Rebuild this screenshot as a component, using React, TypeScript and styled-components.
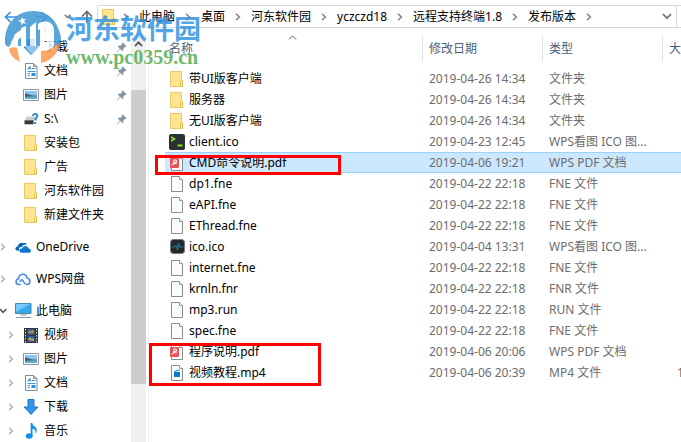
import React from 'react';
import styled, { createGlobalStyle, css } from 'styled-components';

const GlobalStyle = createGlobalStyle`
  * { box-sizing: border-box; }
  body {
    margin: 0;
    background: #fff;
    color: #000;
    font: 12px/20px 'Noto Sans', 'Noto Sans CJK SC', sans-serif;
    overflow: hidden;
  }
  button {
    font: inherit;
    color: inherit;
    background: none;
    border: 0;
    padding: 0;
    margin: 0;
    text-align: left;
    white-space: nowrap;
  }
  svg { display: block; flex: none; }
`;

const Window = styled.div`
  position: relative;
  display: flex;
  flex-direction: column;
  height: 100vh;
  overflow: hidden;
`;

const Toolbar = styled.header`
  display: flex;
  flex: none;
  height: 35px;
  padding: 5px 0 7px 4px;
`;

const NavButtons = styled.div`
  display: flex;
  align-items: center;
  flex: 0 0 93px;
`;

const NavButton = styled.button<{ $wide?: boolean }>`
  width: ${p => (p.$wide ? 30 : 16)}px;
`;

const AddressBar = styled.nav`
  display: flex;
  align-items: center;
  flex: 1;
  min-width: 0;
  height: 23px;
  border: 1px solid #d9d9d9;
  border-right: 0;
  padding-left: 4px;
`;

const Crumb = styled.span`
  display: flex;
  align-items: center;
  gap: 10px;
  margin-left: 10px;

  &:first-of-type {
    margin-left: 7px;
  }
`;

const Dropdown = styled.button`
  display: flex;
  align-items: center;
  justify-content: flex-end;
  flex: 1;
  height: 100%;
  padding-right: 4px;
  border-right: 1px solid #d9d9d9;
  margin-right: 4px;
`;

const Body = styled.div`
  display: flex;
  flex: 1;
  min-height: 0;
`;

const Sidebar = styled.aside`
  display: flex;
  flex: 0 0 149px;
  border-right: 1px solid #f0f0f0;
`;

const Tree = styled.nav`
  flex: 1;
  min-width: 0;
  overflow: hidden;
`;

const Group = styled.div`
  margin-bottom: 8px;
`;

const Item = styled.button<{ $nested?: boolean }>`
  display: flex;
  align-items: center;
  width: 100%;
  height: 24px;
  padding-left: ${p => (p.$nested ? 8 : 0)}px;
  padding-right: 4px;
`;

const Expander = styled.span`
  display: flex;
  width: 15px;
`;

const ItemIcon = styled.span`
  display: flex;
  justify-content: center;
  width: 16px;
  margin-right: 5px;
`;

const ItemLabel = styled.span`
  flex: 1;
`;

const ScrollTrack = styled.div`
  flex: 0 0 15px;
  margin-right: 2px;
  background: #f0f0f0;
`;

const ScrollUp = styled.button`
  display: flex;
  justify-content: center;
  width: 100%;
  height: 55px;
  padding-top: 6px;
`;

const ScrollThumb = styled.div`
  height: 294px;
  background: #cdcdcd;
`;

const Files = styled.main`
  position: relative;
  flex: 1;
  min-width: 0;
  padding-left: 16px;
  overflow: hidden;
`;

const SortMark = styled.span`
  position: absolute;
  left: 139px;
  top: 0;
`;

const Table = styled.table`
  width: 100%;
  table-layout: fixed;
  border-collapse: separate;
  border-spacing: 0;
`;

const Heading = styled.th<{ $width?: number; $first?: boolean }>`
  width: ${p => (p.$width ? `${p.$width}px` : 'auto')};
  height: 27px;
  padding: 0 0 0 ${p => (p.$first ? 4 : 6)}px;
  border-right: ${p => (p.$width ? '1px solid #e5e5e5' : '0')};
  color: #4c607a;
  font-weight: 400;
  text-align: left;
  white-space: nowrap;
`;

const Spacer = styled.tr`
  height: 6px;
`;

const Row = styled.tr<{ $selected?: boolean }>`
  height: 21px;
  ${p =>
    p.$selected &&
    css`
      background: #cce8ff;
      td {
        box-shadow: inset 0 1px #99d1ff, inset 0 -1px #99d1ff;
      }
    `}
`;

const Cell = styled.td<{ $size?: boolean }>`
  height: 21px;
  padding: 0 0 0 ${p => (p.$size ? 14 : 6)}px;
  color: #6d6d6d;
  line-height: 20px;
  white-space: nowrap;
  overflow: hidden;
`;

const NameCell = styled(Cell)`
  padding-left: 4px;
  color: #000;
`;

const FileName = styled.span`
  display: flex;
  align-items: center;
  gap: 4px;
  height: 20px;
`;

const FileIcon = styled.span`
  display: flex;
  justify-content: center;
  width: 16px;
`;

const Mark = styled.div<{ $x: number; $y: number; $w: number; $h: number }>`
  position: absolute;
  left: ${p => p.$x}px;
  top: ${p => p.$y}px;
  width: ${p => p.$w}px;
  height: ${p => p.$h}px;
  border: 3px solid #fd0000;
  pointer-events: none;
`;

const Watermark = styled.div`
  position: absolute;
  left: 5px;
  top: 10px;
  display: flex;
  gap: 4px;
  opacity: 0.8;
  pointer-events: none;
`;

const Brand = styled.div`
  color: #2a8fe0;
  font: 700 27px/32px 'Noto Sans CJK SC', sans-serif;
`;

const Site = styled.div`
  color: #4aa84a;
  font: 700 20px/22px 'Liberation Serif', serif;
  margin-top: 2px;
`;

const BrandText = styled.div`
  padding-top: 2px;
  white-space: nowrap;
`;

const Chevron = ({ color = '#8a8a8a' }: { color?: string }) => (
  <svg width="6" height="8" viewBox="0 0 6 8" fill="none" stroke={color} strokeWidth="1.6">
    <path d="M1 .8 4.4 4 1 7.2" />
  </svg>
);

const ChevronDown = () => (
  <svg width="10" height="7" viewBox="0 0 10 7" fill="none" stroke="#777" strokeWidth="1.8">
    <path d="M1 1.2 5 5.2 9 1.2" />
  </svg>
);

const Arrow = ({ color, turn }: { color: string; turn: number }) => (
  <svg width="14" height="14" viewBox="0 0 14 14" fill="none" stroke={color} strokeWidth="1.7">
    <path transform={`rotate(${turn} 7 7)`} d="M13 7H1.5M6.5 2 1.5 7l5 5" />
  </svg>
);

const Pin = () => (
  <svg width="11" height="11" viewBox="0 0 11 11" fill="#8795a1">
    <path d="M6.6.3 10.7 4.4 9.6 5 8.9 4.9 7.3 6.7 7.2 8.8 6.2 9 4.2 7.1.9 10.5.4 10.2 3.8 6.7 1.9 4.8 2.2 3.8 4.3 3.7 6.1 2 6 1.3Z" />
  </svg>
);

const Folder = () => (
  <svg width="14" height="16" viewBox="0 0 14 16">
    <path d="M.5.5h11v9h1v6H.5z" fill="#ffe591" stroke="#ecc95c" />
    <path d="M10.5 15.5v-5l1-1h1v6z" fill="#fff0b5" stroke="#e6c04c" />
  </svg>
);

const Page = ({ children }: { children?: React.ReactNode }) => (
  <svg width="14" height="16" viewBox="0 0 14 16">
    <path d="M1.5.5h8l3 3v12h-11z" fill="#fafbfb" stroke="#8c8c8c" />
    <path d="M9.5.5v3h3" fill="#fff" stroke="#9a9a9a" />
    {children}
  </svg>
);

const Pdf = () => (
  <Page>
    <rect x="0" y="3" width="9" height="10" rx="1" fill="#e8515a" />
    <path d="M1.8 10.6c.4-1.8 2.2-2.6 5-2.4M3.8 9.8V5h2.5v2.6H3.9" fill="none" stroke="#fff" />
  </Page>
);

const Video = () => (
  <Page>
    <path d="M4 7h6v5H4z" fill="#0878d0" />
    <path d="m4 6 5.7-1.6.3 1L4.3 7z" fill="#1594e8" />
  </Page>
);

const Terminal = () => (
  <svg width="16" height="16" viewBox="0 0 16 16">
    <rect width="16" height="16" rx="2" fill="#2b3033" />
    <path d="m2 3 3.5 2L2 7" fill="none" stroke="#8be234" strokeWidth="1.6" />
    <path d="M8.5 11.5h5" stroke="#7be022" strokeWidth="2" />
  </svg>
);

const Pulse = () => (
  <svg width="15" height="15" viewBox="0 0 15 15">
    <rect x=".5" y=".5" width="14" height="14" rx="3" fill="#25292c" stroke="#777" />
    <path d="M2 8h3l1-1.5L7.5 11l1-7 1 4H13" fill="none" stroke="#237c98" />
  </svg>
);

const Doc = () => (
  <svg width="13" height="16" viewBox="0 0 13 16">
    <path d="M.5.5h8l3.5 3v12H.5z" fill="#fff" stroke="#858a8e" />
    <path d="M8.5.5v3H12" fill="none" stroke="#858a8e" />
    <path d="M3 6.5 4.7 3 6 6.5M2.5 5.5h3M7 5.5h3.5M2.5 8.5h8M2.5 10.5H5M2.5 12.5H5" fill="none" stroke="#3f95d5" />
    <path d="M6.5 10h4v3h-4z" fill="#2d8ed0" />
  </svg>
);

const Picture = () => (
  <svg width="16" height="12" viewBox="0 0 16 12">
    <path d="M.5.5h15v11H.5z" fill="#fff" stroke="#8d959b" />
    <path d="M2 2h12v8H2z" fill="#8cc4f2" />
    <path d="M2 4.5c3 0 5 2.5 12 2V9H2z" fill="#35647b" />
    <path d="M2 8c4-1 8-.5 12-.8V10H2z" fill="#6fa5c8" />
  </svg>
);

const Drive = () => (
  <svg width="15" height="12" viewBox="0 0 15 12">
    <path d="M3 3.5h8l3 4H.5z" fill="#c9cccf" />
    <path d="M.5 7.3h9v4h-9z" fill="#353b40" />
    <path d="M9 3C9 .2 13.6.3 13.4 3c-.2 1.8-2.2 1.8-2.2 4.2" fill="none" stroke="#1d86d8" strokeWidth="1.8" />
    <path d="M10.2 9h2v2h-2z" fill="#1d86d8" />
  </svg>
);

const OneDrive = () => (
  <svg width="16" height="11" viewBox="0 0 16 11">
    <path d="M1.8 8.6C-.6 7.8.2 4.5 2.7 4.5 3 1.5 6.5-.3 9 1.3c1.2-.6 2.7 0 3 1.4-2.7-.4-4.2.5-4.9 2.2C4.5 4.6 3.5 7 4.2 8.8z" fill="#0d67b5" />
    <path d="M5.8 10.8c-2.4-.9-1.5-4.6 1.4-4.2.8-3.5 5.8-3.7 6.4 0 3.1.2 2.9 4 .5 4.2z" fill="#0a78d2" />
  </svg>
);

const Cloud = () => (
  <svg width="16" height="13" viewBox="0 0 17 13" fill="none" stroke="#4b8df0" strokeWidth="1.7">
    <path d="M6.2 11.8H4C.2 11.2.2 6.3 3.8 5.7 4.2-.5 12-.5 12.7 4.9c4.2.7 4.1 6.6.1 6.9-2.3.1-3-1.6-4.6-4.2C7.2 6.2 5 7.5 5.7 9.2" />
  </svg>
);

const Computer = () => (
  <svg width="17" height="16" viewBox="0 0 17 16">
    <path d="M.5.5h15.5v10H.5z" fill="#35a9ee" stroke="#4788ad" />
    <path d="M1 1h14L1 9z" fill="#75ccfa" />
    <path d="M5.5 12h6M1 14.5h15" stroke="#8596a7" />
  </svg>
);

const Film = () => (
  <svg width="14" height="15" viewBox="0 0 14 15">
    <path d="M0 0h14v15H0z" fill="#333" />
    <path d="M1.5 1v14M12.5 1v14" stroke="#ddd" strokeDasharray="1.5 1.5" />
    <path d="M3.5 1h7v6h-7zM3.5 8h7v6h-7z" fill="#2464ad" />
    <path d="m4 5 2-3 1 2 2-2 1 3zM4 12l2-3 2 2 2-1v3z" fill="#d3a82b" />
    <path d="M6 5h3M5 13h3" stroke="#c74430" />
  </svg>
);

const Download = () => (
  <svg width="16" height="16" viewBox="0 0 16 16">
    <path d="M5 .5h6V8h4L8 15.5 1 8h4z" fill="#3493e4" stroke="#1c79c9" />
  </svg>
);

const Music = () => (
  <svg width="13" height="16" viewBox="0 0 13 16" fill="#0f91e8">
    <ellipse cx="4.2" cy="13" rx="3.4" ry="2.7" />
    <path d="M5.7 0h1.5c.3 3 4.9 3.5 4.5 7.7-.2 1.3-.6 2.2-1.3 2.8.3-2.8-.5-4.3-2.9-5V13H5.7z" />
  </svg>
);

const Logo = () => (
  <svg width="57" height="54" viewBox="0 0 57 54">
    <path d="M0 33C-1 15 11 1 28 1c12 0 21 6 25 17 4 8 4 17 0 23-3-1-8-2-12-5V24c0-4-3-6-6-6v18H12V27L4 37C1 36 0 35 0 33Z" fill="#3191d2" />
    <path d="M3 40 10 24 16 20v-2l5-2v20h-5v-9l-3 3v8zM25 17l6-5v24h-6zM33 14c8-5 16-2 16 7v15c-2 3-5 5-8 5V23c0-4-4-5-8-3z" fill="#fff" />
    <path d="m17 7-1 3-3 1 3 1v3l2-2 3 1-2-3 2-2h-3z" fill="#fff" />
    <path d="M4 39c3-2 6-2 8-1l3 14C9 49 5 45 4 39ZM36 53V41c7 0 13-3 19-9-1 10-8 19-19 21Z" fill="#ff9140" />
    <path d="m19 36 8 9 8-9z" fill="#a5cff2" />
  </svg>
);

const crumbs = ['此电脑', '桌面', '河东软件园', 'yczczd18', '远程支持终端1.8', '发布版本'];

const quickAccess = [
  { label: '下载', icon: <Download />, pinned: true },
  { label: '文档', icon: <Doc />, pinned: true },
  { label: '图片', icon: <Picture />, pinned: true },
  { label: 'S:\\', icon: <Drive />, pinned: true },
  { label: '安装包', icon: <Folder /> },
  { label: '广告', icon: <Folder /> },
  { label: '河东软件园', icon: <Folder /> },
  { label: '新建文件夹', icon: <Folder /> },
];

const computer = [
  { label: '视频', icon: <Film /> },
  { label: '图片', icon: <Picture /> },
  { label: '文档', icon: <Doc /> },
  { label: '下载', icon: <Download /> },
  { label: '音乐', icon: <Music /> },
];

const icons = { folder: Folder, page: Page, pdf: Pdf, video: Video, terminal: Terminal, pulse: Pulse };

type FileEntry = { name: string; icon: keyof typeof icons; date: string; type: string; size?: string; selected?: boolean };

const files: FileEntry[] = [
  { name: '带UI版客户端', icon: 'folder', date: '2019-04-26 14:34', type: '文件夹' },
  { name: '服务器', icon: 'folder', date: '2019-04-26 14:34', type: '文件夹' },
  { name: '无UI版客户端', icon: 'folder', date: '2019-04-26 14:34', type: '文件夹' },
  { name: 'client.ico', icon: 'terminal', date: '2019-04-23 12:45', type: 'WPS看图 ICO 图...' },
  { name: 'CMD命令说明.pdf', icon: 'pdf', date: '2019-04-06 19:21', type: 'WPS PDF 文档', selected: true },
  { name: 'dp1.fne', icon: 'page', date: '2019-04-22 22:18', type: 'FNE 文件' },
  { name: 'eAPI.fne', icon: 'page', date: '2019-04-22 22:18', type: 'FNE 文件' },
  { name: 'EThread.fne', icon: 'page', date: '2019-04-22 22:18', type: 'FNE 文件' },
  { name: 'ico.ico', icon: 'pulse', date: '2019-04-04 13:31', type: 'WPS看图 ICO 图...' },
  { name: 'internet.fne', icon: 'page', date: '2019-04-22 22:18', type: 'FNE 文件' },
  { name: 'krnln.fnr', icon: 'page', date: '2019-04-22 22:18', type: 'FNR 文件' },
  { name: 'mp3.run', icon: 'page', date: '2019-04-22 22:18', type: 'RUN 文件' },
  { name: 'spec.fne', icon: 'page', date: '2019-04-22 22:18', type: 'FNE 文件' },
  { name: '程序说明.pdf', icon: 'pdf', date: '2019-04-06 20:06', type: 'WPS PDF 文档' },
  { name: '视频教程.mp4', icon: 'video', date: '2019-04-06 20:39', type: 'MP4 文件', size: '1' },
];

export default function App() {
  return (
    <Window>
      <GlobalStyle />
      <Toolbar>
        <NavButtons>
          <NavButton $wide aria-label="后退"><Arrow color="#3293ed" turn={0} /></NavButton>
          <NavButton $wide aria-label="前进"><Arrow color="#b5b5b5" turn={180} /></NavButton>
          <NavButton aria-label="历史记录">
            <svg width="7" height="5" viewBox="0 0 7 5" fill="none" stroke="#777" strokeWidth="1.4"><path d="m.7.8 2.8 2.8L6.3.8" /></svg>
          </NavButton>
          <NavButton aria-label="向上"><Arrow color="#6c6c6c" turn={90} /></NavButton>
        </NavButtons>
        <AddressBar aria-label="路径">
          <Folder />
          {crumbs.map(name => (
            <Crumb key={name}>
              <Chevron />
              <button>{name}</button>
            </Crumb>
          ))}
          <Crumb><Chevron /></Crumb>
          <Dropdown aria-label="展开地址栏"><ChevronDown /></Dropdown>
        </AddressBar>
      </Toolbar>
      <Body>
        <Sidebar>
          <Tree aria-label="文件夹">
            <Group>
              {quickAccess.map(item => (
                <Item key={item.label} $nested>
                  <Expander />
                  <ItemIcon>{item.icon}</ItemIcon>
                  <ItemLabel>{item.label}</ItemLabel>
                  {item.pinned && <Pin />}
                </Item>
              ))}
            </Group>
            <Group>
              <Item>
                <Expander><Chevron color="#b5b5b5" /></Expander>
                <ItemIcon><OneDrive /></ItemIcon>
                <ItemLabel>OneDrive</ItemLabel>
              </Item>
            </Group>
            <Group>
              <Item>
                <Expander><Chevron color="#b5b5b5" /></Expander>
                <ItemIcon><Cloud /></ItemIcon>
                <ItemLabel>WPS网盘</ItemLabel>
              </Item>
            </Group>
            <Group>
              <Item>
                <Expander>
                  <svg width="8" height="6" viewBox="0 0 8 6" fill="none" stroke="#555" strokeWidth="1.6"><path d="m0 1 3 3.4L6.5 1" /></svg>
                </Expander>
                <ItemIcon><Computer /></ItemIcon>
                <ItemLabel>此电脑</ItemLabel>
              </Item>
              {computer.map(item => (
                <Item key={item.label} $nested>
                  <Expander><Chevron color="#b5b5b5" /></Expander>
                  <ItemIcon>{item.icon}</ItemIcon>
                  <ItemLabel>{item.label}</ItemLabel>
                </Item>
              ))}
            </Group>
          </Tree>
          <ScrollTrack>
            <ScrollUp aria-label="向上滚动">
              <svg width="9" height="6" viewBox="0 0 9 6" fill="none" stroke="#505050" strokeWidth="1.8"><path d="m1 5 3.5-3.7L8 5" /></svg>
            </ScrollUp>
            <ScrollThumb />
          </ScrollTrack>
        </Sidebar>
        <Files>
          <SortMark>
            <svg width="9" height="5" viewBox="0 0 9 5" fill="none" stroke="#666"><path d="m1 4.5 3.5-3.7L8 4.5" /></svg>
          </SortMark>
          <Table>
            <thead>
              <tr>
                <Heading $width={258} $first>名称</Heading>
                <Heading $width={120}>修改日期</Heading>
                <Heading $width={120}>类型</Heading>
                <Heading>大</Heading>
              </tr>
            </thead>
            <tbody>
              <Spacer aria-hidden="true" />
              {files.map(file => {
                const Icon = icons[file.icon];
                return (
                  <Row key={file.name} $selected={file.selected}>
                    <NameCell>
                      <FileName>
                        <FileIcon><Icon /></FileIcon>
                        {file.name}
                      </FileName>
                    </NameCell>
                    <Cell>{file.date}</Cell>
                    <Cell>{file.type}</Cell>
                    <Cell $size>{file.size}</Cell>
                  </Row>
                );
              })}
            </tbody>
          </Table>
          <Mark $x={6} $y={120} $w={186} $h={20} />
          <Mark $x={0} $y={308} $w={172} $h={43} />
        </Files>
      </Body>
      <Watermark>
        <Logo />
        <BrandText>
          <Brand>河东软件园</Brand>
          <Site>www.pc0359.cn</Site>
        </BrandText>
      </Watermark>
    </Window>
  );
}
